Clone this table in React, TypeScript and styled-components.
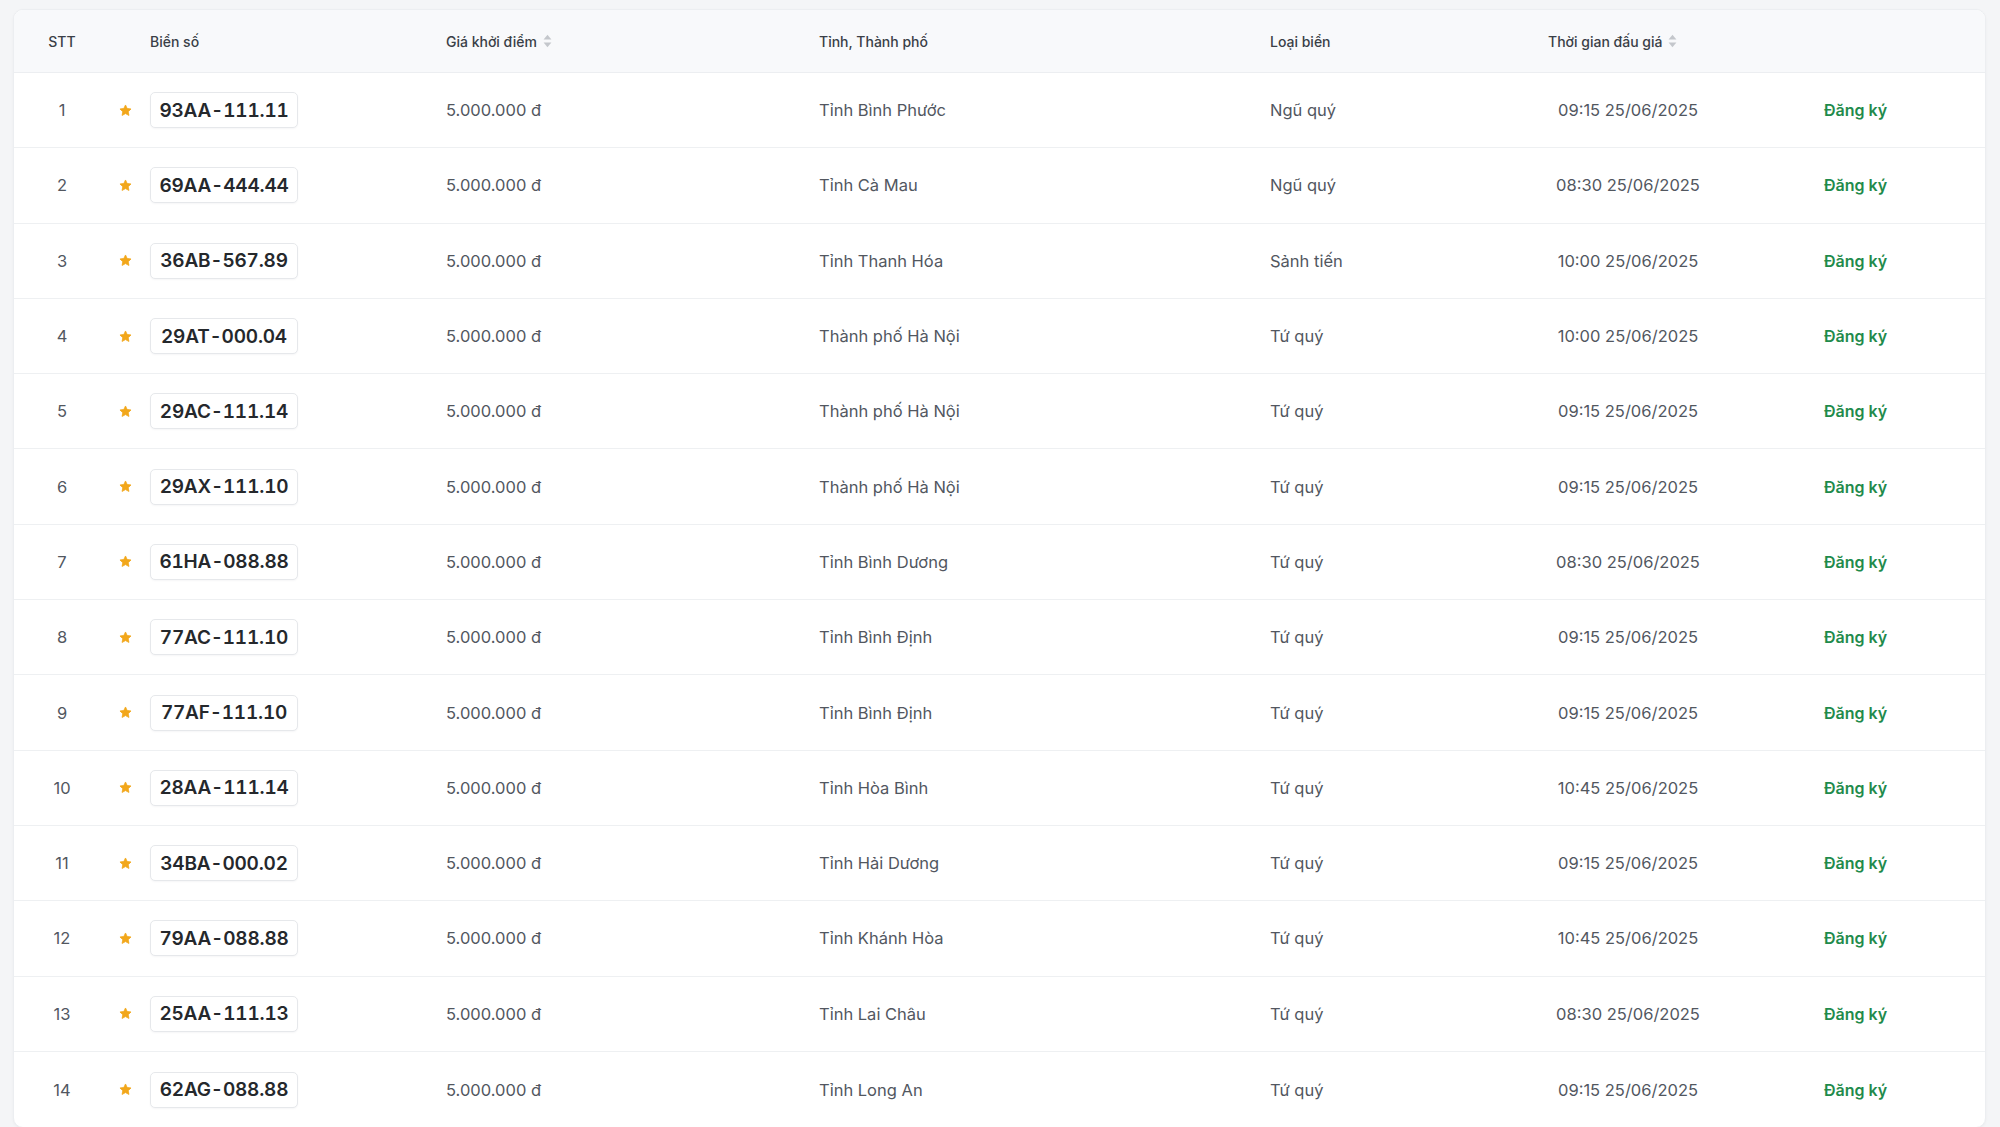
import React from "react";
import styled, { createGlobalStyle } from "styled-components";

const Global = createGlobalStyle`
  html, body { margin: 0; padding: 0; background: #f4f5f7; }
  body { font-family: Inter, "Noto Sans", "Liberation Sans", sans-serif; -webkit-font-smoothing: antialiased; }
  * { box-sizing: border-box; }
`;

const Page = styled.div`
  padding: 9px 14px 0 13px;
`;

const Card = styled.div`
  background: #ffffff;
  border: 1px solid #eceef1;
  border-radius: 10px;
  box-shadow: 0 1px 3px rgba(16, 24, 40, 0.04);
  overflow: hidden;
`;

const cols = "96px 30px 306px 373px 451px 278px 160px 1fr";

const HeaderRow = styled.div`
  display: grid;
  grid-template-columns: ${cols};
  height: 63px;
  align-items: center;
  background: #f8f9fb;
  border-bottom: 1px solid #eceef1;
`;

const Row = styled.div`
  display: grid;
  grid-template-columns: ${cols};
  height: 75.3px;
  align-items: center;
  border-bottom: 1px solid #eef0f2;
  &:last-child { border-bottom: none; }
`;

const Th = styled.div<{ $center?: boolean; $indent?: boolean }>`
  font-size: 14px;
  font-weight: 500;
  color: #3a3f47;
  white-space: nowrap;
  display: flex;
  align-items: center;
  gap: 6px;
  padding-left: ${(p) => (p.$indent ? "10px" : "0")};
  justify-content: ${(p) => (p.$center ? "center" : "flex-start")};
`;

const Td = styled.div<{ $align?: "left" | "center" }>`
  font-size: 16.5px;
  color: #52575f;
  white-space: nowrap;
  display: flex;
  align-items: center;
  justify-content: ${(p) => (p.$align === "center" ? "center" : "flex-start")};
`;

const Plate = styled.div`
  display: inline-flex;
  align-items: center;
  justify-content: center;
  width: 148px;
  height: 36px;
  margin-left: 10px;
  border: 1px solid #e6e8eb;
  border-radius: 5px;
  background: #fff;
  box-shadow: 0 1px 2px rgba(16, 24, 40, 0.04);
  font-size: 19px;
  font-weight: 600;
  font-variant-numeric: tabular-nums;
  font-feature-settings: "tnum" 1;
  letter-spacing: -0.2px;
  color: #25282c;
`;

const Action = styled.a`
  font-size: 16px;
  font-weight: 600;
  color: #1f8b4c;
  padding-left: 116px;
  cursor: pointer;
`;

const SortIcon = () => (
  <svg width="9" height="14" viewBox="0 0 9 14" aria-hidden>
    <path d="M4.5 0.8 L8.4 5.6 H0.6 Z" fill="#c4c7cc" />
    <path d="M4.5 13.2 L8.4 8.4 H0.6 Z" fill="#c4c7cc" />
  </svg>
);

const Star = () => (
  <svg width="13" height="13" viewBox="0 0 24 24" aria-hidden>
    <path
      d="M12 1.8l3.1 6.5 7.1.9-5.2 4.9 1.3 7-6.3-3.4-6.3 3.4 1.3-7L1.8 9.2l7.1-.9z"
      fill="#f2a71b"
      stroke="#f2a71b"
      strokeWidth="1.5"
      strokeLinejoin="round"
    />
  </svg>
);

type Item = { plate: string; province: string; type: string; time: string };

const data: Item[] = [
  { plate: "93AA-111.11", province: "Tỉnh Bình Phước", type: "Ngũ quý", time: "09:15 25/06/2025" },
  { plate: "69AA-444.44", province: "Tỉnh Cà Mau", type: "Ngũ quý", time: "08:30 25/06/2025" },
  { plate: "36AB-567.89", province: "Tỉnh Thanh Hóa", type: "Sảnh tiến", time: "10:00 25/06/2025" },
  { plate: "29AT-000.04", province: "Thành phố Hà Nội", type: "Tứ quý", time: "10:00 25/06/2025" },
  { plate: "29AC-111.14", province: "Thành phố Hà Nội", type: "Tứ quý", time: "09:15 25/06/2025" },
  { plate: "29AX-111.10", province: "Thành phố Hà Nội", type: "Tứ quý", time: "09:15 25/06/2025" },
  { plate: "61HA-088.88", province: "Tỉnh Bình Dương", type: "Tứ quý", time: "08:30 25/06/2025" },
  { plate: "77AC-111.10", province: "Tỉnh Bình Định", type: "Tứ quý", time: "09:15 25/06/2025" },
  { plate: "77AF-111.10", province: "Tỉnh Bình Định", type: "Tứ quý", time: "09:15 25/06/2025" },
  { plate: "28AA-111.14", province: "Tỉnh Hòa Bình", type: "Tứ quý", time: "10:45 25/06/2025" },
  { plate: "34BA-000.02", province: "Tỉnh Hải Dương", type: "Tứ quý", time: "09:15 25/06/2025" },
  { plate: "79AA-088.88", province: "Tỉnh Khánh Hòa", type: "Tứ quý", time: "10:45 25/06/2025" },
  { plate: "25AA-111.13", province: "Tỉnh Lai Châu", type: "Tứ quý", time: "08:30 25/06/2025" },
  { plate: "62AG-088.88", province: "Tỉnh Long An", type: "Tứ quý", time: "09:15 25/06/2025" },
];

export default function App() {
  return (
    <>
      <Global />
      <Page>
        <Card>
          <HeaderRow>
            <Th $center>STT</Th>
            <Th />
            <Th $indent>Biển số</Th>
            <Th>
              Giá khởi điểm <SortIcon />
            </Th>
            <Th>Tỉnh, Thành phố</Th>
            <Th>Loại biển</Th>
            <Th>
              Thời gian đấu giá <SortIcon />
            </Th>
            <Th />
          </HeaderRow>
          {data.map((d, i) => (
            <Row key={i}>
              <Td $align="center">{i + 1}</Td>
              <Td $align="center">
                <Star />
              </Td>
              <Td>
                <Plate>{d.plate}</Plate>
              </Td>
              <Td>5.000.000 đ</Td>
              <Td>{d.province}</Td>
              <Td>{d.type}</Td>
              <Td $align="center">{d.time}</Td>
              <Td>
                <Action>Đăng ký</Action>
              </Td>
            </Row>
          ))}
        </Card>
      </Page>
    </>
  );
}
